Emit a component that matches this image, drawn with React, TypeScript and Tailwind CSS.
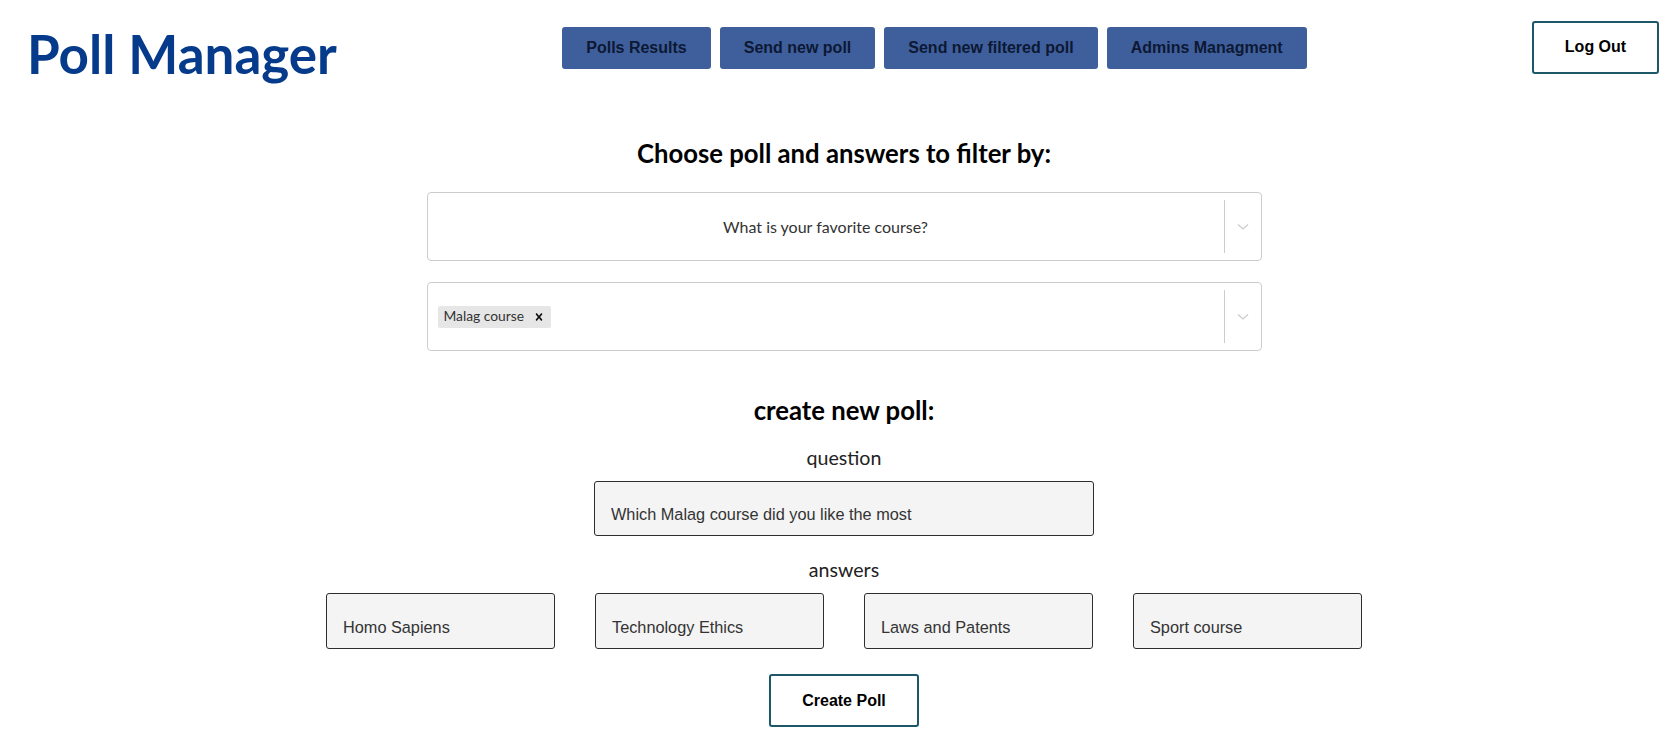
import { useState } from "react"

const navItems = ["Polls Results", "Send new poll", "Send new filtered poll", "Admins Managment"]

function Chevron() {
  return (
    <svg width="12" height="8" viewBox="0 0 12 8" className="block">
      <polyline points="1,1.5 6,6 11,1.5" fill="none" stroke="#cccccc" strokeWidth="1.3" />
    </svg>
  )
}

function SelectBox({ children, centered }: { children: React.ReactNode; centered?: boolean }) {
  return (
    <div className="flex h-[69px] w-[835px] items-stretch rounded-[4px] border border-[#cccccc] bg-white">
      <div className={`flex flex-1 items-center px-[10px] ${centered ? "justify-center" : ""}`}>
        {children}
      </div>
      <div className="flex items-center">
        <span className="my-[8px] h-[53px] w-px bg-[#cccccc]" />
        <div className="flex w-[36px] items-center justify-center">
          <Chevron />
        </div>
      </div>
    </div>
  )
}

function TextBox({ value, width }: { value: string; width: string }) {
  return (
    <input
      readOnly
      value={value}
      className={`${width} rounded-[3px] border border-[#2e2e2e] bg-[#f4f4f4] px-[16px] pt-[16px] pb-[4px] text-[16.3px] text-[#333333] outline-none`}
      style={{ fontFamily: '"Liberation Sans", Arial, sans-serif' }}
    />
  )
}

export default function App() {
  const [tags, setTags] = useState(["Malag course"])

  return (
    <div className="min-h-screen bg-white" style={{ fontFamily: 'Lato, "Open Sans", sans-serif' }}>
      {/* Header */}
      <header className="flex h-[94px] items-center justify-between pl-[27px] pr-[17px]">
        <h1 className="pt-[12px] text-[53px] font-bold leading-none text-[#063a8b]">Poll Manager</h1>
        <nav className="flex gap-[9px] pt-[2px]" style={{ fontFamily: '"Liberation Sans", Arial, sans-serif' }}>
          {navItems.map((item) => (
            <button
              key={item}
              className="h-[42px] rounded-[3px] bg-[#3e5f9c] px-[24px] text-[16px] font-bold text-[#0d1833]"
            >
              {item}
            </button>
          ))}
        </nav>
        <button
          className="h-[53px] w-[127px] rounded-[3px] border-2 border-[#1d5868] bg-white text-[16px] font-bold text-black"
          style={{ fontFamily: '"Liberation Sans", Arial, sans-serif' }}
        >
          Log Out
        </button>
      </header>

      <main className="flex flex-col items-center pl-[12px]">
        <h2 className="mt-[44px] text-[25.7px] font-bold leading-[30px] text-black">
          Choose poll and answers to filter by:
        </h2>

        <div className="mt-[24px]">
          <SelectBox centered>
            <span className="text-[16px] text-[#333333]">What is your favorite course?</span>
          </SelectBox>
        </div>

        <div className="mt-[21px]">
          <SelectBox>
            {tags.map((t) => (
              <span key={t} className="flex h-[22px] items-center rounded-[2px] bg-[#e6e6e6] pl-[6px] pr-[5px] text-[13.8px] text-[#333333]">
                {t}
                <button onClick={() => setTags(tags.filter((x) => x !== t))} className="ml-[8px] flex items-center">
                  <svg width="14" height="14" viewBox="0 0 20 20">
                    <path
                      fill="#111"
                      d="M14.348 14.849c-0.469 0.469-1.229 0.469-1.697 0l-2.651-3.030-2.651 3.029c-0.469 0.469-1.229 0.469-1.697 0-0.469-0.469-0.469-1.229 0-1.697l2.758-3.15-2.759-3.152c-0.469-0.469-0.469-1.228 0-1.697s1.228-0.469 1.697 0l2.652 3.031 2.651-3.031c0.469-0.469 1.228-0.469 1.697 0s0.469 1.229 0 1.697l-2.758 3.152 2.758 3.150c0.469 0.469 0.469 1.229 0 1.698z"
                    />
                  </svg>
                </button>
              </span>
            ))}
          </SelectBox>
        </div>

        <h2 className="mt-[44px] text-[25.7px] font-bold leading-[30px] text-black">create new poll:</h2>

        <label className="mt-[20px] text-[19.6px] leading-[26px] text-[#222222]">question</label>
        <div className="mt-[10px] flex">
          <TextBox value="Which Malag course did you like the most" width="h-[55px] w-[500px]" />
        </div>

        <label className="mt-[21px] text-[19.6px] leading-[26px] text-[#222222]">answers</label>
        <div className="mt-[10px] flex gap-[40px]">
          {["Homo Sapiens", "Technology Ethics", "Laws and Patents", "Sport course"].map((a) => (
            <TextBox key={a} value={a} width="h-[56px] w-[229px]" />
          ))}
        </div>

        <button
          className="mt-[25px] h-[53px] w-[150px] rounded-[3px] border-2 border-[#1d5868] bg-white text-[16px] font-bold text-black"
          style={{ fontFamily: '"Liberation Sans", Arial, sans-serif' }}
        >
          Create Poll
        </button>
      </main>
    </div>
  )
}
